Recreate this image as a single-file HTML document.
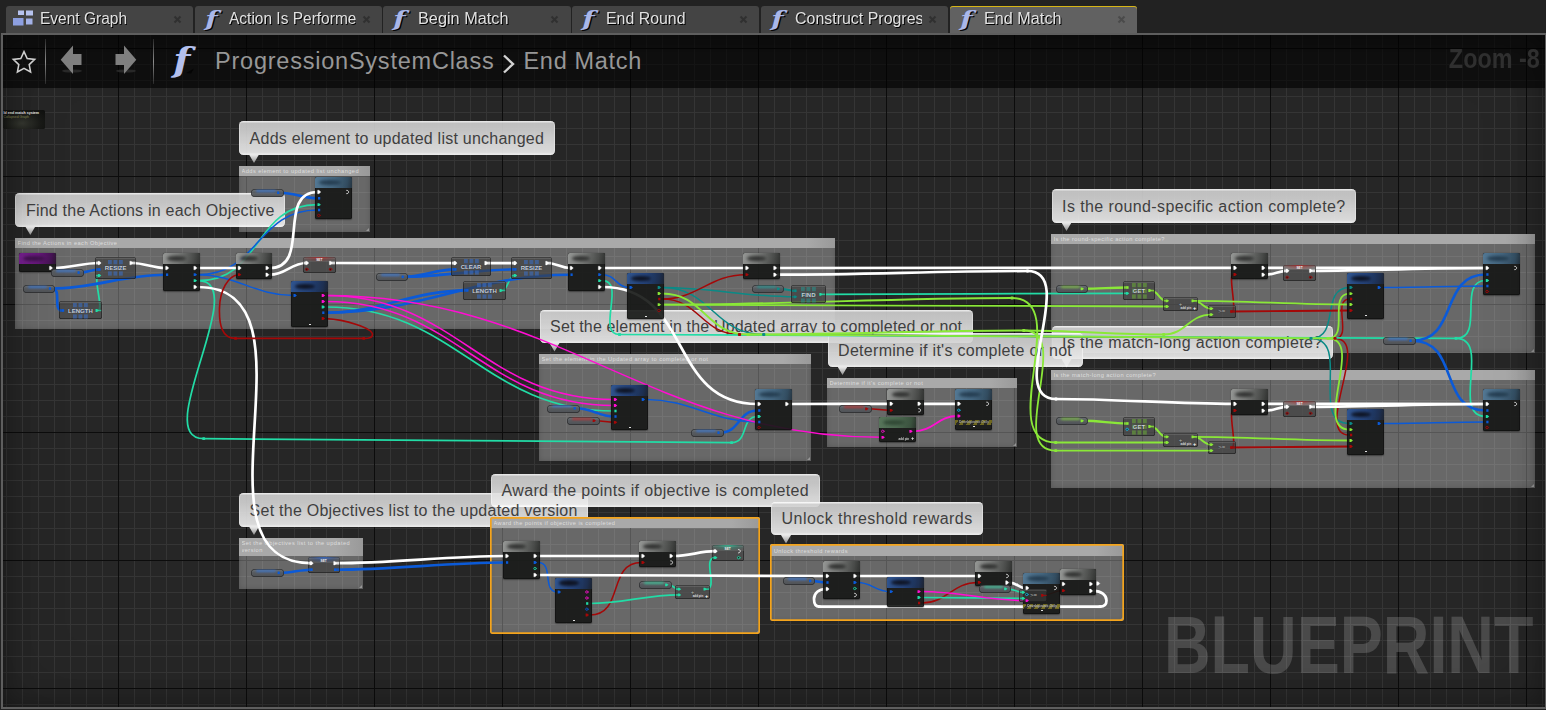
<!DOCTYPE html><html><head><meta charset="utf-8"><title>End Match - Blueprint</title><style>
html,body{margin:0;padding:0;background:#222}
body{width:1546px;height:710px;overflow:hidden;position:relative;font-family:"Liberation Sans",sans-serif}
.abs,.abs *{position:absolute}
#panel{left:1px;top:33px;width:1545px;height:676px;background:#5e5e5e}
#graph{left:2px;top:2px;width:1542px;height:672px;overflow:hidden;background-color:#262626;
 background-image:
  linear-gradient(#0c0c0c 1px,transparent 1px),linear-gradient(90deg,#0c0c0c 1px,transparent 1px),
  linear-gradient(#353535 1px,transparent 1px),linear-gradient(90deg,#353535 1px,transparent 1px);
 background-size:128px 128px,128px 128px,16px 16px,16px 16px;
 background-position:0 13px,115px 0,0 13px,3px 0;
 background-repeat:repeat,repeat,repeat,repeat}
#g{left:-3px;top:-35px;width:1546px;height:710px}
.tab{top:6px;height:27px;width:187.2px;overflow:hidden;background:#444;border-radius:3px 3px 0 0;color:#e2e2e2;font-size:16px;line-height:27px;text-shadow:1px 1px 0 #000}
.tab.act{background:#616161;box-shadow:inset 0 1px 0 #d6b516}
.tab .t{left:34.3px;top:-1px;width:127px;overflow:hidden;white-space:nowrap;height:27px}
.tab .t span{left:0;top:0;transform-origin:0 50%;display:block}
.tab .x{left:167px;top:8.5px;width:9px;height:9px;text-shadow:none}
.tab .fi{left:6px;top:1px}
.cb{background:rgba(255,255,255,.305);box-shadow:inset 0 0 5px rgba(0,0,0,.18)}
.cb .ti{left:0;top:0;right:0;background:linear-gradient(90deg,#a9a9a9 0,#a9a9a9 calc(100% - 28px),#999 100%);color:rgba(255,255,255,.8);font-size:5.6px;line-height:7px;white-space:nowrap;overflow:hidden}
.tt{color:rgba(255,255,255,.62);font-size:5.7px;line-height:7px;letter-spacing:.42px;white-space:nowrap;overflow:hidden}
.cb.sel{border-radius:2px;overflow:hidden}
.cb.sel:after{content:'';position:absolute;left:0;top:0;right:0;bottom:0;box-shadow:inset 0 0 0 1.7px #f4a41c;border-radius:2px}
.cb .grip{right:1px;bottom:1px;width:0;height:0;border-left:3px solid transparent;border-bottom:3px solid rgba(255,255,255,.35)}
.bb{height:33.5px;border-radius:4.5px;background:linear-gradient(#fff 0,#f6f6f6 1px,#d0d0d0 2.2px,#d4d4d4 25%,#e2e2e2 60%,#eeeeee 92%,#fff 97%);opacity:.9;box-shadow:inset -1px 0 0 rgba(255,255,255,.55),inset 1px 0 0 rgba(255,255,255,.5);color:#454545;font-size:16px;line-height:33px;white-space:nowrap}
.bt{color:#3f3f3f;margin-top:.5px;font-size:16px;line-height:33px;white-space:nowrap;height:33px}
.bb i{left:10px;top:33.5px;width:10px;height:8.5px;background:linear-gradient(#fff,#9a9a9a);clip-path:polygon(0 0,100% 0,50% 100%)}
.nd{border-radius:1.8px;background:#151715;box-shadow:inset 0 0 0 .7px rgba(0,0,0,.65),0 .5px 1.5px rgba(0,0,0,.45);opacity:.9;overflow:hidden}
.nd .hd{left:0;top:0;right:0;height:11px}
.nd .bl{left:22%;top:2.5px;width:50%;height:5.5px;border-radius:50%;filter:blur(1.6px)}
.nd.black .hd{background:linear-gradient(100deg,#9a9c9a 0%,#787a78 42%,#484a48 80%,#2a2c2a 100%)}
.nd.black .bl{background:#2e2f2e;left:12%}
.nd.dblue .hd{background:linear-gradient(100deg,#2a5394 0%,#1d3f7c 50%,#15294e 85%,#141c2a 100%)}
.nd.dblue .bl{background:#050b1c;left:10%;width:55%}
.nd.lblue .hd{background:linear-gradient(100deg,#527b9a 0%,#416783 50%,#2d4a60 85%,#1f2f3c 100%)}
.nd.lblue .bl{background:#1f3a50;left:10%;width:60%}
.nd.green .hd{background:linear-gradient(100deg,#56775a 0%,#4a6b4f 50%,#36503a 85%,#232f25 100%)}
.nd.green .bl{background:#2c4631;left:10%;width:60%}
.nd.purple .hd{background:linear-gradient(100deg,#7a1a96 0%,#68107f 50%,#420b52 85%,#26102b 100%)}
.nd.purple .bl{background:#3a0a48;left:10%;width:60%}
.nd .hz{left:0;right:0;height:5px;background:repeating-linear-gradient(120deg,#a89a1a 0 3px,#2a2a22 3px 6px);opacity:.62}
.nd .hz b{left:4px;right:3px;top:0;font-size:3.4px;line-height:5px;color:#f4f4f4;white-space:nowrap;font-weight:700;overflow:hidden}
.nd .ct{left:50%;bottom:2.6px;width:1.8px;height:.9px;margin-left:-.6px;background:#eee}
.cp{border-radius:2.6px;background:rgba(60,60,60,.66);box-shadow:inset 0 0 0 .7px rgba(20,20,20,.7),inset 0 1.6px 0 rgba(255,255,255,.22);color:#c9d0da;font-weight:700;font-size:6px;text-align:center;overflow:hidden}
.cp .ic{left:50%;top:50%;width:14.8px;height:15.6px;margin:-7.8px 0 0 -7.4px;opacity:.58}
.cp .lb{left:0;right:0;top:50%;margin-top:-3.6px;line-height:8px;letter-spacing:0;text-shadow:0 0 1px #222}
.cp .ap{right:6.5px;bottom:.6px;font-size:3px;line-height:4px;color:#ddd;font-weight:700}
.cp .pl{right:1.5px;bottom:0px;font-size:5.5px;line-height:5px;color:#fff;font-weight:700}
.st .sh{left:0;right:0;top:0;height:5.4px;opacity:.8}
.st .sl{left:0;right:0;top:1.2px;font-size:3.2px;line-height:4px;color:#f2f2f2;text-align:center;font-weight:700}
.pl2{border-radius:4px;background:linear-gradient(#70757b 0%,#575b60 45%,#4c4f54 100%);box-shadow:inset 0 0 0 .7px rgba(25,25,25,.75);overflow:hidden;opacity:.93}
.pl2 u{left:5px;right:8px;top:.9px;height:2px;border-radius:2px;filter:blur(1.1px);opacity:.75}
#vig{left:0;top:0;right:0;bottom:0;box-shadow:inset 0 0 26px rgba(0,0,0,.38),inset 0 0 70px rgba(0,0,0,.12);pointer-events:none}
#hdr{left:3px;top:35px;width:1542px;height:53px;background:rgba(0,0,0,.6)}
#crumb{left:215px;top:47px;font-size:23.5px;line-height:28px;color:#979797;white-space:nowrap}
#zoom{right:6.5px;top:41.5px;font-size:28px;line-height:34px;font-weight:700;color:#2f2f2f;white-space:nowrap;transform-origin:100% 50%;transform:scaleX(.836)}
#wm{left:1164.2px;top:599.5px;font-size:81px;line-height:90px;font-weight:700;color:rgba(255,255,255,.17);white-space:nowrap;transform-origin:0 50%;transform:scaleX(.797)}
svg{left:0;top:0;overflow:visible}
</style></head><body class="abs">
<div class="tab" style="left:5.8px"><svg class="fi" style="left:7px;top:4px" width="22" height="18" viewBox="0 0 22 18"><rect x="5" y="0.5" width="6" height="4.5" fill="#b7c3ee"/><rect x="13" y="0.5" width="7" height="5" fill="#b7c3ee"/><rect x="0" y="8" width="10.5" height="7.5" fill="#8d9fe0"/><rect x="13" y="8.5" width="6.5" height="6" fill="#a4b2e8"/></svg><div class="t"><span style="transform:scaleX(0.9685)">Event Graph</span></div><svg class="x" viewBox="0 0 9 9"><path d="M1.5 1.5L7.5 7.5M7.5 1.5L1.5 7.5" stroke="#303030" stroke-width="2"/></svg></div>
<div class="tab" style="left:194.6px"><svg class="fi" width="26" height="27" viewBox="0 0 26 27"><text transform="translate(4.3 19) scale(1.36 1)" font-family="DejaVu Serif,Liberation Serif,serif" font-style="italic" font-weight="700" font-size="21" fill="#a9b7ea">f</text></svg><div class="t"><span style="transform:scaleX(0.9680)">Action Is Performed</span></div><svg class="x" viewBox="0 0 9 9"><path d="M1.5 1.5L7.5 7.5M7.5 1.5L1.5 7.5" stroke="#303030" stroke-width="2"/></svg></div>
<div class="tab" style="left:383.4px"><svg class="fi" width="26" height="27" viewBox="0 0 26 27"><text transform="translate(4.3 19) scale(1.36 1)" font-family="DejaVu Serif,Liberation Serif,serif" font-style="italic" font-weight="700" font-size="21" fill="#a9b7ea">f</text></svg><div class="t"><span style="transform:scaleX(1.0175)">Begin Match</span></div><svg class="x" viewBox="0 0 9 9"><path d="M1.5 1.5L7.5 7.5M7.5 1.5L1.5 7.5" stroke="#303030" stroke-width="2"/></svg></div>
<div class="tab" style="left:572.2px"><svg class="fi" width="26" height="27" viewBox="0 0 26 27"><text transform="translate(4.3 19) scale(1.36 1)" font-family="DejaVu Serif,Liberation Serif,serif" font-style="italic" font-weight="700" font-size="21" fill="#a9b7ea">f</text></svg><div class="t"><span style="transform:scaleX(0.9930)">End Round</span></div><svg class="x" viewBox="0 0 9 9"><path d="M1.5 1.5L7.5 7.5M7.5 1.5L1.5 7.5" stroke="#303030" stroke-width="2"/></svg></div>
<div class="tab" style="left:761px"><svg class="fi" width="26" height="27" viewBox="0 0 26 27"><text transform="translate(4.3 19) scale(1.36 1)" font-family="DejaVu Serif,Liberation Serif,serif" font-style="italic" font-weight="700" font-size="21" fill="#a9b7ea">f</text></svg><div class="t"><span style="transform:scaleX(0.9968)">Construct Progress</span></div><svg class="x" viewBox="0 0 9 9"><path d="M1.5 1.5L7.5 7.5M7.5 1.5L1.5 7.5" stroke="#303030" stroke-width="2"/></svg></div>
<div class="tab act" style="left:949.8px"><svg class="fi" width="26" height="27" viewBox="0 0 26 27"><text transform="translate(4.3 19) scale(1.36 1)" font-family="DejaVu Serif,Liberation Serif,serif" font-style="italic" font-weight="700" font-size="21" fill="#a9b7ea">f</text></svg><div class="t"><span style="transform:scaleX(1.0133)">End Match</span></div><svg class="x" viewBox="0 0 9 9"><path d="M1.5 1.5L7.5 7.5M7.5 1.5L1.5 7.5" stroke="#4a4a4a" stroke-width="2"/></svg></div>
<div id="panel"><div id="graph"><div id="g">
<div class="cb" style="left:239px;top:166px;width:131px;height:66px"><div class="ti" style="height:10px"></div><div class="grip"></div></div>
<div class="bb" style="left:239px;top:121px;width:315.5px"><i></i></div>
<div class="cb" style="left:15px;top:238px;width:819.5px;height:91px"><div class="ti" style="height:9.6px"></div><div class="grip"></div></div>
<div class="bb" style="left:15.3px;top:193px;width:269.7px"><i></i></div>
<div class="cb" style="left:539px;top:354px;width:272px;height:106.7px"><div class="ti" style="height:10px"></div><div class="grip"></div></div>
<div class="bb" style="left:539.5px;top:309.5px;width:433px"><i></i></div>
<div class="cb" style="left:1051px;top:234px;width:483.6px;height:118.5px"><div class="ti" style="height:10px"></div><div class="grip"></div></div>
<div class="bb" style="left:1051.5px;top:189px;width:304.5px"><i></i></div>
<div class="cb" style="left:1051px;top:369.5px;width:483.6px;height:118.5px"><div class="ti" style="height:10.5px"></div><div class="grip"></div></div>
<div class="bb" style="left:1051.5px;top:325.5px;width:281.5px"><i></i></div>
<div class="cb" style="left:827px;top:378px;width:189.5px;height:68.6px"><div class="ti" style="height:10px"></div><div class="grip"></div></div>
<div class="bb" style="left:827.5px;top:333px;width:255px"><i></i></div>
<div class="cb" style="left:239px;top:537.5px;width:123.5px;height:51.5px"><div class="ti" style="height:18.5px"></div><div class="grip"></div></div>
<div class="bb" style="left:239px;top:493px;width:349px"><i></i></div>
<div class="cb sel" style="left:490px;top:517px;width:270px;height:116.6px"><div class="ti" style="height:10.5px"></div><div class="grip"></div></div>
<div class="bb" style="left:491px;top:473.5px;width:328.5px"><i></i></div>
<div class="cb sel" style="left:770.2px;top:544.2px;width:353.8px;height:76.5px"><div class="ti" style="height:11.8px"></div><div class="grip"></div></div>
<div class="bb" style="left:771px;top:501.5px;width:212px"><i></i></div>
<div class="bt" style="left:249.6px;top:121px;letter-spacing:0.236px">Adds element to updated list unchanged</div>
<div class="bt" style="left:25.9px;top:193px;letter-spacing:0.226px">Find the Actions in each Objective</div>
<div class="bt" style="left:550.1px;top:309.5px;letter-spacing:0.163px">Set the element in the Updated array to completed or not</div>
<div class="bt" style="left:1062.1px;top:189px;letter-spacing:0.392px">Is the round-specific action complete?</div>
<div class="bt" style="left:1062.1px;top:325.5px;letter-spacing:0.364px">Is the match-long action complete?</div>
<div class="bt" style="left:838.1px;top:333px;letter-spacing:0.288px">Determine if it&#x27;s complete or not</div>
<div class="bt" style="left:249.6px;top:493px;letter-spacing:0.248px">Set the Objectives list to the updated version</div>
<div class="bt" style="left:501.6px;top:473.5px;letter-spacing:0.340px">Award the points if objective is completed</div>
<div class="bt" style="left:781.6px;top:501.5px;letter-spacing:0.436px">Unlock threshold rewards</div>
<div class="tt" style="left:241.5px;top:168.2px;width:127px;height:8.4px">Adds element to updated list unchanged</div>
<div class="tt" style="left:17.5px;top:240.2px;width:815.5px;height:8px">Find the Actions in each Objective</div>
<div class="tt" style="left:541.5px;top:356.2px;width:268px;height:8.4px">Set the element in the Updated array to completed or not</div>
<div class="tt" style="left:1053.5px;top:236.2px;width:479.6px;height:8.4px">Is the round-specific action complete?</div>
<div class="tt" style="left:1053.5px;top:371.7px;width:479.6px;height:8.9px">Is the match-long action complete?</div>
<div class="tt" style="left:829.5px;top:380.2px;width:185.5px;height:8.4px">Determine if it&#x27;s complete or not</div>
<div class="tt" style="left:241.5px;top:539.7px;width:119.5px;height:16.9px">Set the Objectives list to the updated<br>version</div>
<div class="tt" style="left:493.5px;top:520.3px;width:266px;height:8.9px">Award the points if objective is completed</div>
<div class="tt" style="left:773.7px;top:547.5px;width:349.8px;height:10.2px">Unlock threshold rewards</div>
<svg width="1546" height="710" viewBox="0 0 1546 710" fill="none" stroke-linecap="round">
<path d="M662,287.5C709.43,287.5 747.57,296.8 795,296.8" stroke="#0a8a86" stroke-width="1.5"/>
<path d="M780.3,288.8C785.87,288.8 789.43,290.8 795,290.8" stroke="#0a8a86" stroke-width="2.2"/>
<path d="M662,287.5C711.57,287.5 714.13,334.5 763.7,334.5" stroke="#0a8a86" stroke-width="1.5"/>
<path d="M763.7,334.5C947.43,334.5 1127.27,338.4 1311,338.4" stroke="#0a8a86" stroke-width="1.5"/>
<path d="M1311,338.4C1340.8,338.4 1319.7,287.5 1349.5,287.5" stroke="#0a8a86" stroke-width="1.5"/>
<path d="M1311,338.4C1352.2,338.4 1308.3,423.5 1349.5,423.5" stroke="#0a8a86" stroke-width="1.5"/>
<path d="M662,299C697.93,299 709.57,274.7 745.5,274.7" stroke="#a40808" stroke-width="1.5"/>
<path d="M662,299C699.67,299 701.83,334.5 739.5,334.5" stroke="#a40808" stroke-width="1.5"/>
<path d="M739.5,334.5C939.3,334.5 1135.2,338.4 1335,338.4" stroke="#a40808" stroke-width="1.5"/>
<path d="M1335,338.4C1352.97,338.4 1331.53,299 1349.5,299" stroke="#a40808" stroke-width="1.5"/>
<path d="M1231.7,311.5C1271.3,311.5 1309.9,310.5 1349.5,310.5" stroke="#a40808" stroke-width="1.8"/>
<path d="M1231.7,311.5C1237.7,311.5 1227.5,274.5 1233.5,274.5" stroke="#a40808" stroke-width="1.6"/>
<path d="M1335,338.4C1372.03,338.4 1312.47,435 1349.5,435" stroke="#a40808" stroke-width="1.5"/>
<path d="M1231.7,447.5C1271.3,447.5 1309.9,446.5 1349.5,446.5" stroke="#a40808" stroke-width="1.8"/>
<path d="M1231.7,447.5C1237.7,447.5 1227.5,410.5 1233.5,410.5" stroke="#a40808" stroke-width="1.6"/>
<path d="M596,420.65C602.52,420.65 607.38,422.3 613.9,422.3" stroke="#a40808" stroke-width="1.5"/>
<path d="M868.5,408.8C876.1,408.8 882.2,410.3 889.8,410.3" stroke="#a40808" stroke-width="1.5"/>
<path d="M589.9,615C624.6,615 606.8,562.5 641.5,562.5" stroke="#a40808" stroke-width="1.5"/>
<path d="M921.8,603C947.37,603 952.33,582.4 977.9,582.4" stroke="#a40808" stroke-width="1.5"/>
<path d="M1043.2,595.4C1051.03,595.4 1054.17,590.7 1062,590.7" stroke="#a40808" stroke-width="1.2"/>
<path d="M97.6,310.5C104.6,310.5 92,275.5 99,275.5" stroke="#22dca6" stroke-width="1.7"/>
<path d="M198,280.7C263.17,280.7 252.33,204.7 317.5,204.7" stroke="#22dca6" stroke-width="1.7"/>
<path d="M198,280.7C252.57,280.7 149.13,438.7 203.7,438.7" stroke="#22dca6" stroke-width="1.7"/>
<path d="M203.7,438.7C380.97,438.7 554.33,442.6 731.6,442.6" stroke="#22dca6" stroke-width="1.7"/>
<path d="M731.6,442.6C749,442.6 740.3,416.5 757.7,416.5" stroke="#22dca6" stroke-width="1.7"/>
<path d="M501.6,290.5C508.6,290.5 507.9,275.5 514.9,275.5" stroke="#22dca6" stroke-width="1.7"/>
<path d="M326,307C456.63,307 483.27,411 613.9,411" stroke="#22dca6" stroke-width="1.7"/>
<path d="M602.5,280.7C626.1,280.7 595.9,334.5 619.5,334.5" stroke="#22dca6" stroke-width="1.7"/>
<path d="M821.4,294.3C923.6,294.3 1024.8,293.3 1127,293.3" stroke="#22dca6" stroke-width="1.7"/>
<path d="M619.5,334.5C899.63,334.5 1175.87,338.4 1456,338.4" stroke="#22dca6" stroke-width="1.7"/>
<path d="M1456,338.4C1485.23,338.4 1456.57,280.5 1485.8,280.5" stroke="#22dca6" stroke-width="1.7"/>
<path d="M1456,338.4C1491.97,338.4 1449.83,416.5 1485.8,416.5" stroke="#22dca6" stroke-width="1.7"/>
<path d="M589.9,603.5C622.43,603.5 646.37,594.9 678.9,594.9" stroke="#22dca6" stroke-width="1.7"/>
<path d="M668.5,584.8C673.43,584.8 673.97,589.2 678.9,589.2" stroke="#22dca6" stroke-width="1.7"/>
<path d="M705.6,589.2C719.3,589.2 701.5,557.7 715.2,557.7" stroke="#22dca6" stroke-width="1.7"/>
<path d="M921.8,597.5C955.83,597.5 988.97,598.4 1023,598.4" stroke="#22dca6" stroke-width="1.7"/>
<path d="M1007.5,588.85C1013.82,588.85 1016.68,592.3 1023,592.3" stroke="#22dca6" stroke-width="1.7"/>
<path d="M80.4,272.5C87.6,272.5 91.8,269.5 99,269.5" stroke="#0b5ad8" stroke-width="2.6"/>
<path d="M51.8,288.55C94.32,288.55 122.98,274.7 165.5,274.7" stroke="#0b5ad8" stroke-width="2.6"/>
<path d="M51.8,288.55C62.72,288.55 51.68,310.5 62.6,310.5" stroke="#0b5ad8" stroke-width="2.6"/>
<path d="M198,274.7C259.4,274.7 256.1,210 317.5,210" stroke="#0b5ad8" stroke-width="1.5"/>
<path d="M198,274.7C236.77,274.7 254.73,295.5 293.5,295.5" stroke="#0b5ad8" stroke-width="1.5"/>
<path d="M280,192.7C294.37,192.7 303.13,198.3 317.5,198.3" stroke="#0b5ad8" stroke-width="2.6"/>
<path d="M404.5,276.8C423.77,276.8 435.63,269.4 454.9,269.4" stroke="#0b5ad8" stroke-width="2.6"/>
<path d="M404.5,276.8C443.77,276.8 475.63,269.4 514.9,269.4" stroke="#0b5ad8" stroke-width="2.6"/>
<path d="M326,312.7C380.4,312.7 412.5,290.4 466.9,290.4" stroke="#0b5ad8" stroke-width="2.6"/>
<path d="M326,312.7C420,312.7 476,274.7 570,274.7" stroke="#0b5ad8" stroke-width="2.6"/>
<path d="M602.5,274.7C615.77,274.7 616.23,287.5 629.5,287.5" stroke="#0b5ad8" stroke-width="1.5"/>
<path d="M1412.4,340.7C1458.93,340.7 1439.27,274.5 1485.8,274.5" stroke="#0b5ad8" stroke-width="2.6"/>
<path d="M1382,287.5C1417.1,287.5 1450.7,286 1485.8,286" stroke="#0b5ad8" stroke-width="1.5"/>
<path d="M1412.4,340.7C1460.13,340.7 1438.07,410.5 1485.8,410.5" stroke="#0b5ad8" stroke-width="2.6"/>
<path d="M1382,423.5C1417.1,423.5 1450.7,422 1485.8,422" stroke="#0b5ad8" stroke-width="1.5"/>
<path d="M576.5,408.3C591.7,408.3 598.7,416.5 613.9,416.5" stroke="#0b5ad8" stroke-width="2.6"/>
<path d="M646,399.5C690.73,399.5 712.97,422 757.7,422" stroke="#0b5ad8" stroke-width="1.5"/>
<path d="M720.3,432.6C740.13,432.6 737.87,410.5 757.7,410.5" stroke="#0b5ad8" stroke-width="2.6"/>
<path d="M280.5,572.8C291.73,572.8 299.87,569.7 311.1,569.7" stroke="#0b5ad8" stroke-width="2.6"/>
<path d="M335.6,569.7C394.63,569.7 446.47,562.5 505.5,562.5" stroke="#0b5ad8" stroke-width="2.6"/>
<path d="M538,562.5C554.4,562.5 541.3,592 557.7,592" stroke="#0b5ad8" stroke-width="1.5"/>
<path d="M812,580.9C817.17,580.9 820.73,582.5 825.9,582.5" stroke="#0b5ad8" stroke-width="2.6"/>
<path d="M857.8,582.5C871.5,582.5 876.1,591.6 889.8,591.6" stroke="#0b5ad8" stroke-width="1.5"/>
<path d="M326,295.5C456.63,295.5 483.27,399.5 613.9,399.5" stroke="#ff0ed2" stroke-width="1.5"/>
<path d="M326,295.5C558.43,295.5 649.07,437.3 881.5,437.3" stroke="#ff0ed2" stroke-width="1.5"/>
<path d="M326,301.5C456.63,301.5 483.27,405.5 613.9,405.5" stroke="#ff0ed2" stroke-width="1.5"/>
<path d="M913.7,431.3C933.4,431.3 937.8,416 957.5,416" stroke="#ff0ed2" stroke-width="1.8"/>
<path d="M921.8,591.6C959.2,591.6 987.6,600.6 1025,600.6" stroke="#ff0ed2" stroke-width="1.5"/>
<path d="M662,293.5C704.33,293.5 705.67,334.5 748,334.5" stroke="#8ae838" stroke-width="1.8"/>
<path d="M662,304.7C830.87,304.7 997.93,306.5 1166.8,306.5" stroke="#8ae838" stroke-width="1.8"/>
<path d="M662,304.7C780.9,304.7 893.1,298 1012,298" stroke="#8ae838" stroke-width="1.8"/>
<path d="M1012,298C1074.73,298 992.97,442.5 1055.7,442.5" stroke="#8ae838" stroke-width="1.8"/>
<path d="M1055.7,442.5C1092.73,442.5 1129.77,442.5 1166.8,442.5" stroke="#8ae838" stroke-width="1.8"/>
<path d="M748,334.5C841.23,334.5 930.47,330.5 1023.7,330.5" stroke="#8ae838" stroke-width="1.8"/>
<path d="M1023.7,330.5C1074.43,330.5 1004.97,450.7 1055.7,450.7" stroke="#8ae838" stroke-width="1.8"/>
<path d="M1055.7,450.7C1107.57,450.7 1159.33,450.6 1211.2,450.6" stroke="#8ae838" stroke-width="1.8"/>
<path d="M1023.7,330.5C1071.7,330.5 1115.7,334.5 1163.7,334.5" stroke="#8ae838" stroke-width="1.8"/>
<path d="M1163.7,334.5C1186.17,334.5 1188.73,314.6 1211.2,314.6" stroke="#8ae838" stroke-width="1.8"/>
<path d="M748,334.5C942.63,334.5 1133.37,338.4 1328,338.4" stroke="#8ae838" stroke-width="1.8"/>
<path d="M1328,338.4C1350.07,338.4 1327.43,293.7 1349.5,293.7" stroke="#8ae838" stroke-width="1.8"/>
<path d="M1084,288.8C1098.77,288.8 1112.23,287.5 1127,287.5" stroke="#8ae838" stroke-width="2.4"/>
<path d="M1150.4,290.5C1159.3,290.5 1157.9,300.8 1166.8,300.8" stroke="#8ae838" stroke-width="1.8"/>
<path d="M1193.6,300.8C1202.07,300.8 1202.73,308.6 1211.2,308.6" stroke="#8ae838" stroke-width="1.8"/>
<path d="M1193.6,300.8C1246.8,300.8 1296.3,304.5 1349.5,304.5" stroke="#8ae838" stroke-width="1.8"/>
<path d="M1328,338.4C1365.6,338.4 1311.9,429.7 1349.5,429.7" stroke="#8ae838" stroke-width="1.8"/>
<path d="M1084,420.8C1099.23,420.8 1111.77,423.5 1127,423.5" stroke="#8ae838" stroke-width="2.4"/>
<path d="M1150.4,426.5C1159.3,426.5 1157.9,436.8 1166.8,436.8" stroke="#8ae838" stroke-width="1.8"/>
<path d="M1193.6,436.8C1202.07,436.8 1202.73,444.6 1211.2,444.6" stroke="#8ae838" stroke-width="1.8"/>
<path d="M1193.6,436.8C1246.8,436.8 1296.3,440.5 1349.5,440.5" stroke="#8ae838" stroke-width="1.8"/>
<path d="M53.6,268C70.4,268 82.2,263 99,263" stroke="#ffffff" stroke-width="2.7"/>
<path d="M131.8,263C144.7,263 152.6,268 165.5,268" stroke="#ffffff" stroke-width="2.7"/>
<path d="M198,268C211.33,268 224.67,268 238,268" stroke="#ffffff" stroke-width="2.7"/>
<path d="M198,287C327.77,287 181.33,563.2 311.1,563.2" stroke="#ffffff" stroke-width="2.7"/>
<path d="M270,268C311.17,268 276.33,192 317.5,192" stroke="#ffffff" stroke-width="2.7"/>
<path d="M270,274.7C286.1,274.7 290.5,263 306.6,263" stroke="#ffffff" stroke-width="2.7"/>
<path d="M331.3,263C372.53,263 413.67,263.1 454.9,263.1" stroke="#ffffff" stroke-width="2.7"/>
<path d="M486.7,263.1C496.1,263.1 505.5,263.1 514.9,263.1" stroke="#ffffff" stroke-width="2.7"/>
<path d="M547.6,263.1C556.7,263.1 560.9,268 570,268" stroke="#ffffff" stroke-width="2.7"/>
<path d="M602.5,268C650.17,268 697.83,268 745.5,268" stroke="#ffffff" stroke-width="2.7"/>
<path d="M602.5,287C693.23,287 666.97,404 757.7,404" stroke="#ffffff" stroke-width="2.7"/>
<path d="M777.8,268C929.73,268 1081.57,267.9 1233.5,267.9" stroke="#ffffff" stroke-width="2.7"/>
<path d="M777.8,274.7C862.27,274.7 943.03,271 1027.5,271" stroke="#ffffff" stroke-width="2.7"/>
<path d="M1027.5,271C1079.67,271 1003.83,399 1056,399" stroke="#ffffff" stroke-width="2.7"/>
<path d="M1056,399C1116.8,399 1172.7,403.9 1233.5,403.9" stroke="#ffffff" stroke-width="2.7"/>
<path d="M1266,267.9C1339.3,267.9 1412.5,268 1485.8,268" stroke="#ffffff" stroke-width="2.7"/>
<path d="M1266,274.7C1274.3,274.7 1278.7,270.8 1287,270.8" stroke="#ffffff" stroke-width="2.7"/>
<path d="M1311.4,270.8C1370.47,270.8 1426.73,268 1485.8,268" stroke="#ffffff" stroke-width="2.7"/>
<path d="M1266,403.9C1339.3,403.9 1412.5,404 1485.8,404" stroke="#ffffff" stroke-width="2.7"/>
<path d="M1266,410.7C1274.3,410.7 1278.7,406.8 1287,406.8" stroke="#ffffff" stroke-width="2.7"/>
<path d="M1311.4,406.8C1370.47,406.8 1426.73,404 1485.8,404" stroke="#ffffff" stroke-width="2.7"/>
<path d="M789.7,404C823.13,404 856.37,403.8 889.8,403.8" stroke="#ffffff" stroke-width="2.7"/>
<path d="M922,403.8C933.83,403.8 945.67,403.8 957.5,403.8" stroke="#ffffff" stroke-width="2.7"/>
<path d="M335.6,563.2C394.63,563.2 446.47,556 505.5,556" stroke="#ffffff" stroke-width="2.7"/>
<path d="M538,556C572.5,556 607,556 641.5,556" stroke="#ffffff" stroke-width="2.7"/>
<path d="M538,575C634.3,575 729.6,576 825.9,576" stroke="#ffffff" stroke-width="2.7"/>
<path d="M674,556C689.33,556 699.87,551.2 715.2,551.2" stroke="#ffffff" stroke-width="2.7"/>
<path d="M857.8,576C897.83,576 937.87,576 977.9,576" stroke="#ffffff" stroke-width="2.7"/>
<path d="M1009.8,582.6C1016.9,582.6 1018.6,588 1025.7,588" stroke="#ffffff" stroke-width="2.7"/>
<path d="M326,318.6 C345,319.5 372.5,328 372.5,334.5 C372.5,338 368,338.6 363.7,338.4 L235.5,338.4 C222,338.4 219,325 219.5,308 C220,290 228,276 238,274.7" stroke="#a40808" stroke-width="1.6"/>
<path d="M1094,590.9 C1101,591 1106.5,595 1106.5,600.5 C1106.5,605 1104,606.6 1100,606.6 L819.3,606.6 C815.5,606.6 814,603 814,599 C814,593 819,589.2 825.5,589" stroke="#ffffff" stroke-width="2.7"/>
<rect x="202.1" y="437.3" width="3.2" height="2.8" rx="1" fill="#22dca6" stroke="none"/>
<rect x="730" y="441.2" width="3.2" height="2.8" rx="1" fill="#22dca6" stroke="none"/>
<rect x="233.9" y="337" width="3.2" height="2.8" rx="1" fill="#a40808" stroke="none"/>
<rect x="362.1" y="337" width="3.2" height="2.8" rx="1" fill="#a40808" stroke="none"/>
<rect x="617.9" y="333.1" width="3.2" height="2.8" rx="1" fill="#22dca6" stroke="none"/>
<rect x="1454.4" y="337" width="3.2" height="2.8" rx="1" fill="#22dca6" stroke="none"/>
<rect x="737.9" y="333.1" width="3.2" height="2.8" rx="1" fill="#a40808" stroke="none"/>
<rect x="1333.4" y="337" width="3.2" height="2.8" rx="1" fill="#a40808" stroke="none"/>
<rect x="746.4" y="333.1" width="3.2" height="2.8" rx="1" fill="#8ae838" stroke="none"/>
<rect x="1326.4" y="337" width="3.2" height="2.8" rx="1" fill="#8ae838" stroke="none"/>
<rect x="1162.1" y="333.1" width="3.2" height="2.8" rx="1" fill="#8ae838" stroke="none"/>
<rect x="1022.1" y="329.1" width="3.2" height="2.8" rx="1" fill="#8ae838" stroke="none"/>
<rect x="1010.4" y="296.6" width="3.2" height="2.8" rx="1" fill="#8ae838" stroke="none"/>
<rect x="1054.1" y="441.1" width="3.2" height="2.8" rx="1" fill="#8ae838" stroke="none"/>
<rect x="1054.1" y="449.3" width="3.2" height="2.8" rx="1" fill="#8ae838" stroke="none"/>
<rect x="762.1" y="333.1" width="3.2" height="2.8" rx="1" fill="#0a8a86" stroke="none"/>
<rect x="1309.4" y="337" width="3.2" height="2.8" rx="1" fill="#0a8a86" stroke="none"/>
<rect x="1025.9" y="269.6" width="3.2" height="2.8" rx="1" fill="#ffffff" stroke="none"/>
<rect x="1054.4" y="397.6" width="3.2" height="2.8" rx="1" fill="#ffffff" stroke="none"/>
<rect x="1098.4" y="605.2" width="3.2" height="2.8" rx="1" fill="#ffffff" stroke="none"/>
<rect x="817.7" y="605.2" width="3.2" height="2.8" rx="1" fill="#ffffff" stroke="none"/>
</svg>
<div class="nd purple" style="left:19.4px;top:253.2px;width:36.2px;height:18.6px"><div class="hd"><div class="bl"></div></div></div>
<div class="pl2" style="left:51.4px;top:268.7px;width:32.5px;height:8px"><u style="background:#2d7af0"></u></div>
<div class="cp" style="left:95.4px;top:257px;width:40.6px;height:21.5px"><svg class="ic" viewBox="0 0 14.8 15.6"><rect x="0.0" y="0.0" width="3.8" height="4.2" fill="#3b6ec4"/><rect x="5.5" y="0.0" width="3.8" height="4.2" fill="#3b6ec4"/><rect x="11.0" y="0.0" width="3.8" height="4.2" fill="#3b6ec4"/><rect x="0.0" y="5.7" width="3.8" height="4.2" fill="#3b6ec4"/><rect x="5.5" y="5.7" width="3.8" height="4.2" fill="#3b6ec4"/><rect x="11.0" y="5.7" width="3.8" height="4.2" fill="#3b6ec4"/><rect x="0.0" y="11.4" width="3.8" height="4.2" fill="#3b6ec4"/><rect x="5.5" y="11.4" width="3.8" height="4.2" fill="#3b6ec4"/><rect x="11.0" y="11.4" width="3.8" height="4.2" fill="#3b6ec4"/></svg><div class="lb">RESIZE</div></div>
<div class="pl2" style="left:23.2px;top:284.8px;width:32.1px;height:7.9px"><u style="background:#2d7af0"></u></div>
<div class="cp" style="left:59px;top:301.2px;width:42.8px;height:18.3px"><svg class="ic" viewBox="0 0 14.8 15.6"><rect x="0.0" y="0.0" width="3.8" height="4.2" fill="#3b6ec4"/><rect x="5.5" y="0.0" width="3.8" height="4.2" fill="#3b6ec4"/><rect x="11.0" y="0.0" width="3.8" height="4.2" fill="#3b6ec4"/><rect x="0.0" y="5.7" width="3.8" height="4.2" fill="#3b6ec4"/><rect x="5.5" y="5.7" width="3.8" height="4.2" fill="#3b6ec4"/><rect x="11.0" y="5.7" width="3.8" height="4.2" fill="#3b6ec4"/><rect x="0.0" y="11.4" width="3.8" height="4.2" fill="#3b6ec4"/><rect x="5.5" y="11.4" width="3.8" height="4.2" fill="#3b6ec4"/><rect x="11.0" y="11.4" width="3.8" height="4.2" fill="#3b6ec4"/></svg><div class="lb">LENGTH</div></div>
<div class="nd black" style="left:163px;top:253.2px;width:37px;height:37.6px"><div class="hd"><div class="bl"></div></div></div>
<div class="nd black" style="left:235.5px;top:253.2px;width:36.5px;height:25.5px"><div class="hd"><div class="bl"></div></div></div>
<div class="cp st" style="left:303px;top:257px;width:32.5px;height:15.5px"><div class="sh" style="background:radial-gradient(ellipse 60% 100% at 50% 0,rgba(200,40,40,.95) 0,rgba(150,70,70,.6) 55%,rgba(130,130,130,.35) 100%)"></div><div class="sl">SET</div></div>
<div class="nd dblue" style="left:291px;top:281px;width:37px;height:46px"><div class="hd"><div class="bl"></div></div><div class="ct"></div></div>
<div class="pl2" style="left:375.5px;top:273px;width:32.5px;height:8px"><u style="background:#2d7af0"></u></div>
<div class="cp" style="left:451.3px;top:257.1px;width:39.6px;height:18.5px"><svg class="ic" viewBox="0 0 14.8 15.6"><rect x="0.0" y="0.0" width="3.8" height="4.2" fill="#3b6ec4"/><rect x="5.5" y="0.0" width="3.8" height="4.2" fill="#3b6ec4"/><rect x="11.0" y="0.0" width="3.8" height="4.2" fill="#3b6ec4"/><rect x="0.0" y="5.7" width="3.8" height="4.2" fill="#3b6ec4"/><rect x="5.5" y="5.7" width="3.8" height="4.2" fill="#3b6ec4"/><rect x="11.0" y="5.7" width="3.8" height="4.2" fill="#3b6ec4"/><rect x="0.0" y="11.4" width="3.8" height="4.2" fill="#3b6ec4"/><rect x="5.5" y="11.4" width="3.8" height="4.2" fill="#3b6ec4"/><rect x="11.0" y="11.4" width="3.8" height="4.2" fill="#3b6ec4"/></svg><div class="lb">CLEAR</div></div>
<div class="cp" style="left:511.3px;top:257.1px;width:40.5px;height:21.5px"><svg class="ic" viewBox="0 0 14.8 15.6"><rect x="0.0" y="0.0" width="3.8" height="4.2" fill="#3b6ec4"/><rect x="5.5" y="0.0" width="3.8" height="4.2" fill="#3b6ec4"/><rect x="11.0" y="0.0" width="3.8" height="4.2" fill="#3b6ec4"/><rect x="0.0" y="5.7" width="3.8" height="4.2" fill="#3b6ec4"/><rect x="5.5" y="5.7" width="3.8" height="4.2" fill="#3b6ec4"/><rect x="11.0" y="5.7" width="3.8" height="4.2" fill="#3b6ec4"/><rect x="0.0" y="11.4" width="3.8" height="4.2" fill="#3b6ec4"/><rect x="5.5" y="11.4" width="3.8" height="4.2" fill="#3b6ec4"/><rect x="11.0" y="11.4" width="3.8" height="4.2" fill="#3b6ec4"/></svg><div class="lb">RESIZE</div></div>
<div class="cp" style="left:463.3px;top:281px;width:42.5px;height:18.7px"><svg class="ic" viewBox="0 0 14.8 15.6"><rect x="0.0" y="0.0" width="3.8" height="4.2" fill="#3b6ec4"/><rect x="5.5" y="0.0" width="3.8" height="4.2" fill="#3b6ec4"/><rect x="11.0" y="0.0" width="3.8" height="4.2" fill="#3b6ec4"/><rect x="0.0" y="5.7" width="3.8" height="4.2" fill="#3b6ec4"/><rect x="5.5" y="5.7" width="3.8" height="4.2" fill="#3b6ec4"/><rect x="11.0" y="5.7" width="3.8" height="4.2" fill="#3b6ec4"/><rect x="0.0" y="11.4" width="3.8" height="4.2" fill="#3b6ec4"/><rect x="5.5" y="11.4" width="3.8" height="4.2" fill="#3b6ec4"/><rect x="11.0" y="11.4" width="3.8" height="4.2" fill="#3b6ec4"/></svg><div class="lb">LENGTH</div></div>
<div class="nd black" style="left:567.5px;top:253.2px;width:37px;height:37.6px"><div class="hd"><div class="bl"></div></div></div>
<div class="nd dblue" style="left:627px;top:273px;width:37px;height:46px"><div class="hd"><div class="bl"></div></div><div class="ct"></div></div>
<div class="nd black" style="left:743px;top:253.2px;width:36.8px;height:25.8px"><div class="hd"><div class="bl"></div></div></div>
<div class="pl2" style="left:751.5px;top:285px;width:32.3px;height:8px"><u style="background:#12a09a"></u></div>
<div class="cp" style="left:791.4px;top:285.3px;width:34.2px;height:18.2px"><svg class="ic" viewBox="0 0 14.8 15.6"><rect x="0.0" y="0.0" width="3.8" height="4.2" fill="#2a8f8a"/><rect x="5.5" y="0.0" width="3.8" height="4.2" fill="#2a8f8a"/><rect x="11.0" y="0.0" width="3.8" height="4.2" fill="#2a8f8a"/><rect x="0.0" y="5.7" width="3.8" height="4.2" fill="#2a8f8a"/><rect x="5.5" y="5.7" width="3.8" height="4.2" fill="#2a8f8a"/><rect x="11.0" y="5.7" width="3.8" height="4.2" fill="#2a8f8a"/><rect x="0.0" y="11.4" width="3.8" height="4.2" fill="#2a8f8a"/><rect x="5.5" y="11.4" width="3.8" height="4.2" fill="#2a8f8a"/><rect x="11.0" y="11.4" width="3.8" height="4.2" fill="#2a8f8a"/></svg><div class="lb">FIND</div></div>
<div class="pl2" style="left:251px;top:189px;width:32.5px;height:7.8px"><u style="background:#2d7af0"></u></div>
<div class="nd lblue" style="left:315px;top:177.2px;width:37px;height:41.8px"><div class="hd"><div class="bl"></div></div></div>
<div class="pl2" style="left:547px;top:404.5px;width:33px;height:8px"><u style="background:#2d7af0"></u></div>
<div class="pl2" style="left:567px;top:416.7px;width:32.5px;height:8.3px"><u style="background:#d02020"></u></div>
<div class="nd dblue" style="left:611.4px;top:385.2px;width:36.6px;height:45.3px"><div class="hd"><div class="bl"></div></div><div class="ct"></div></div>
<div class="pl2" style="left:691.2px;top:428.9px;width:32.6px;height:7.8px"><u style="background:#2d7af0"></u></div>
<div class="nd lblue" style="left:755.2px;top:389.3px;width:36.5px;height:41.2px"><div class="hd"><div class="bl"></div></div></div>
<div class="pl2" style="left:839px;top:405.2px;width:33px;height:7.6px"><u style="background:#d02020"></u></div>
<div class="nd black" style="left:887.3px;top:389px;width:36.7px;height:25.6px"><div class="hd"><div class="bl"></div></div></div>
<div class="nd green" style="left:879px;top:417.3px;width:36.7px;height:24.4px"><div class="hd"><div class="bl"></div></div><div class="ap" style="position:absolute;right:6.5px;bottom:.8px;font-size:3px;line-height:4px;color:#ddd;font-weight:700">add pin</div><div style="position:absolute;right:1.5px;bottom:.3px;font-size:5.5px;line-height:5px;color:#fff;font-weight:700">+</div></div>
<div class="nd lblue" style="left:955px;top:389px;width:37px;height:40.8px"><div class="hd"><div class="bl"></div></div><div class="hz" style="top:30.5px"><b>Development Only</b></div><div class="ct"></div></div>
<div class="pl2" style="left:1056px;top:285px;width:31.5px;height:8px"><u style="background:#86d838"></u></div>
<div class="cp" style="left:1123.4px;top:281px;width:31.2px;height:18.7px"><svg class="ic" viewBox="0 0 14.8 15.6"><rect x="0.0" y="0.0" width="3.8" height="4.2" fill="#6aa83a"/><rect x="5.5" y="0.0" width="3.8" height="4.2" fill="#6aa83a"/><rect x="11.0" y="0.0" width="3.8" height="4.2" fill="#6aa83a"/><rect x="0.0" y="5.7" width="3.8" height="4.2" fill="#6aa83a"/><rect x="5.5" y="5.7" width="3.8" height="4.2" fill="#6aa83a"/><rect x="11.0" y="5.7" width="3.8" height="4.2" fill="#6aa83a"/><rect x="0.0" y="11.4" width="3.8" height="4.2" fill="#6aa83a"/><rect x="5.5" y="11.4" width="3.8" height="4.2" fill="#6aa83a"/><rect x="11.0" y="11.4" width="3.8" height="4.2" fill="#6aa83a"/></svg><div class="lb">GET</div></div>
<div class="cp" style="left:1163.2px;top:297px;width:34.6px;height:13.9px"><div class="lb" style="font-size:6px;color:#b4b4b4;margin-top:-4.2px;font-weight:400">+</div><div class="ap">add pin</div><div class="pl">+</div></div>
<div class="cp" style="left:1207.6px;top:305.4px;width:28.3px;height:12.3px"><div class="lb" style="font-size:6px;color:#b4b4b4;margin-top:-4.2px;font-weight:400">&gt;=</div></div>
<div class="nd black" style="left:1231px;top:253.2px;width:37px;height:25.5px"><div class="hd"><div class="bl"></div></div></div>
<div class="cp st" style="left:1283.4px;top:265px;width:32.2px;height:15.6px"><div class="sh" style="background:radial-gradient(ellipse 60% 100% at 50% 0,rgba(200,40,40,.95) 0,rgba(150,70,70,.6) 55%,rgba(130,130,130,.35) 100%)"></div><div class="sl">SET</div></div>
<div class="nd dblue" style="left:1347px;top:273px;width:37px;height:45.7px"><div class="hd"><div class="bl"></div></div><div class="ct"></div></div>
<div class="nd lblue" style="left:1483.3px;top:253px;width:36.7px;height:42px"><div class="hd"><div class="bl"></div></div></div>
<div class="pl2" style="left:1055.5px;top:417px;width:32px;height:8px"><u style="background:#86d838"></u></div>
<div class="cp" style="left:1123.4px;top:417px;width:31.2px;height:18.7px"><svg class="ic" viewBox="0 0 14.8 15.6"><rect x="0.0" y="0.0" width="3.8" height="4.2" fill="#6aa83a"/><rect x="5.5" y="0.0" width="3.8" height="4.2" fill="#6aa83a"/><rect x="11.0" y="0.0" width="3.8" height="4.2" fill="#6aa83a"/><rect x="0.0" y="5.7" width="3.8" height="4.2" fill="#6aa83a"/><rect x="5.5" y="5.7" width="3.8" height="4.2" fill="#6aa83a"/><rect x="11.0" y="5.7" width="3.8" height="4.2" fill="#6aa83a"/><rect x="0.0" y="11.4" width="3.8" height="4.2" fill="#6aa83a"/><rect x="5.5" y="11.4" width="3.8" height="4.2" fill="#6aa83a"/><rect x="11.0" y="11.4" width="3.8" height="4.2" fill="#6aa83a"/></svg><div class="lb">GET</div></div>
<div class="cp" style="left:1163.2px;top:433px;width:34.6px;height:13.9px"><div class="lb" style="font-size:6px;color:#b4b4b4;margin-top:-4.2px;font-weight:400">+</div><div class="ap">add pin</div><div class="pl">+</div></div>
<div class="cp" style="left:1207.6px;top:441.4px;width:28.3px;height:12.3px"><div class="lb" style="font-size:6px;color:#b4b4b4;margin-top:-4.2px;font-weight:400">&gt;=</div></div>
<div class="nd black" style="left:1231px;top:389.2px;width:37px;height:25.5px"><div class="hd"><div class="bl"></div></div></div>
<div class="cp st" style="left:1283.4px;top:401px;width:32.2px;height:15.6px"><div class="sh" style="background:radial-gradient(ellipse 60% 100% at 50% 0,rgba(200,40,40,.95) 0,rgba(150,70,70,.6) 55%,rgba(130,130,130,.35) 100%)"></div><div class="sl">SET</div></div>
<div class="nd dblue" style="left:1347px;top:409px;width:37px;height:45.7px"><div class="hd"><div class="bl"></div></div><div class="ct"></div></div>
<div class="nd lblue" style="left:1483.3px;top:389px;width:36.7px;height:42px"><div class="hd"><div class="bl"></div></div></div>
<div class="pl2" style="left:1383.3px;top:337px;width:32.6px;height:7.8px"><u style="background:#2d7af0"></u></div>
<div class="pl2" style="left:251px;top:569px;width:33px;height:8px"><u style="background:#2d7af0"></u></div>
<div class="cp st" style="left:307.5px;top:557.4px;width:32.3px;height:15.3px"><div class="sh" style="background:radial-gradient(ellipse 60% 100% at 50% 0,rgba(50,110,220,.95) 0,rgba(70,100,160,.6) 55%,rgba(130,130,130,.35) 100%)"></div><div class="sl">SET</div></div>
<div class="nd black" style="left:503px;top:541px;width:37px;height:37.7px"><div class="hd"><div class="bl"></div></div></div>
<div class="nd dblue" style="left:555.2px;top:577.5px;width:36.7px;height:45.5px"><div class="hd"><div class="bl"></div></div><div class="ct"></div></div>
<div class="nd black" style="left:639px;top:541px;width:37px;height:26px"><div class="hd"><div class="bl"></div></div></div>
<div class="cp st" style="left:711.6px;top:545.4px;width:32.1px;height:15.2px"><div class="sh" style="background:radial-gradient(ellipse 60% 100% at 50% 0,rgba(50,210,165,.95) 0,rgba(70,150,130,.6) 55%,rgba(130,130,130,.35) 100%)"></div><div class="sl">SET</div></div>
<div class="pl2" style="left:639px;top:581px;width:33px;height:8px"><u style="background:#2fe0a8"></u></div>
<div class="cp" style="left:675.3px;top:585.4px;width:34.5px;height:13.2px"><div class="lb" style="font-size:6px;color:#b4b4b4;margin-top:-4.2px;font-weight:400">+</div><div class="ap">add pin</div><div class="pl">+</div></div>
<div class="pl2" style="left:783.3px;top:577.4px;width:32.2px;height:7.4px"><u style="background:#2d7af0"></u></div>
<div class="nd black" style="left:823.4px;top:561.3px;width:36.4px;height:37.4px"><div class="hd"><div class="bl"></div></div></div>
<div class="nd dblue" style="left:887.3px;top:577.4px;width:36.5px;height:29.4px"><div class="hd"><div class="bl"></div></div></div>
<div class="nd black" style="left:975.4px;top:561px;width:36.4px;height:25.3px"><div class="hd"><div class="bl"></div></div></div>
<div class="pl2" style="left:979.2px;top:585.4px;width:31.8px;height:7.3px"><u style="background:#2fe0a8"></u></div>
<div class="nd lblue" style="left:1023.2px;top:573px;width:36.7px;height:40.8px"><div class="hd"><div class="bl"></div></div><div class="hz" style="top:30.9px"><b>Development Only</b></div><div class="ct"></div></div>
<div class="cp" style="left:1019.4px;top:589px;width:28px;height:12.7px"><div class="lb" style="font-size:6px;color:#b4b4b4;margin-top:-4.2px;font-weight:400">&gt;=</div></div>
<div class="nd black" style="left:1059.5px;top:569.2px;width:36.2px;height:25.4px"><div class="hd"><div class="bl"></div></div></div>
<div style="left:3px;top:109.5px;width:42px;height:19.5px;background:radial-gradient(ellipse at 45% 70%,#353730 0%,#1a1b18 55%,#0e0f0e 100%);border-radius:1.5px"><div style="left:.5px;top:1.4px;font-size:3.6px;line-height:4px;color:#eee;font-weight:700;white-space:nowrap">ld end match system</div><div style="left:.5px;top:5.6px;font-size:3.4px;line-height:4px;color:#8a8a55;white-space:nowrap">Collapsed Graph</div></div>
<svg width="1546" height="710" viewBox="0 0 1546 710">
<path d="M96,263H99" stroke="#ffffff" stroke-width="2.7" opacity=".72" fill="none"/>
<path d="M96,269.5H99" stroke="#0b5ad8" stroke-width="2.6" opacity=".72" fill="none"/>
<path d="M101.2,310.5H97.6" stroke="#22dca6" stroke-width="1.5" opacity=".72" fill="none"/>
<path d="M96,275.5H99" stroke="#22dca6" stroke-width="1.5" opacity=".72" fill="none"/>
<path d="M59.6,310.5H62.6" stroke="#0b5ad8" stroke-width="2.6" opacity=".72" fill="none"/>
<path d="M135.4,263H131.8" stroke="#ffffff" stroke-width="2.7" opacity=".72" fill="none"/>
<path d="M308.1,563.2H311.1" stroke="#ffffff" stroke-width="2.7" opacity=".72" fill="none"/>
<path d="M303.6,263H306.6" stroke="#ffffff" stroke-width="2.7" opacity=".72" fill="none"/>
<path d="M334.9,263H331.3" stroke="#ffffff" stroke-width="2.7" opacity=".72" fill="none"/>
<path d="M451.9,263.1H454.9" stroke="#ffffff" stroke-width="2.7" opacity=".72" fill="none"/>
<path d="M490.3,263.1H486.7" stroke="#ffffff" stroke-width="2.7" opacity=".72" fill="none"/>
<path d="M511.9,263.1H514.9" stroke="#ffffff" stroke-width="2.7" opacity=".72" fill="none"/>
<path d="M551.2,263.1H547.6" stroke="#ffffff" stroke-width="2.7" opacity=".72" fill="none"/>
<path d="M451.9,269.4H454.9" stroke="#0b5ad8" stroke-width="2.6" opacity=".72" fill="none"/>
<path d="M511.9,269.4H514.9" stroke="#0b5ad8" stroke-width="2.6" opacity=".72" fill="none"/>
<path d="M463.9,290.4H466.9" stroke="#0b5ad8" stroke-width="2.6" opacity=".72" fill="none"/>
<path d="M505.2,290.5H501.6" stroke="#22dca6" stroke-width="1.5" opacity=".72" fill="none"/>
<path d="M511.9,275.5H514.9" stroke="#22dca6" stroke-width="1.5" opacity=".72" fill="none"/>
<path d="M792,296.8H795" stroke="#0a8a86" stroke-width="1.5" opacity=".72" fill="none"/>
<path d="M792,290.8H795" stroke="#0a8a86" stroke-width="2.2" opacity=".72" fill="none"/>
<path d="M1163.8,306.5H1166.8" stroke="#8ae838" stroke-width="1.5" opacity=".72" fill="none"/>
<path d="M1163.8,442.5H1166.8" stroke="#8ae838" stroke-width="1.5" opacity=".72" fill="none"/>
<path d="M825,294.3H821.4" stroke="#22dca6" stroke-width="1.5" opacity=".72" fill="none"/>
<path d="M1124,293.3H1127" stroke="#22dca6" stroke-width="1.5" opacity=".72" fill="none"/>
<path d="M1208.2,450.6H1211.2" stroke="#8ae838" stroke-width="1.5" opacity=".72" fill="none"/>
<path d="M1208.2,314.6H1211.2" stroke="#8ae838" stroke-width="1.5" opacity=".72" fill="none"/>
<path d="M1124,287.5H1127" stroke="#8ae838" stroke-width="2.4" opacity=".72" fill="none"/>
<path d="M1154,290.5H1150.4" stroke="#8ae838" stroke-width="1.5" opacity=".72" fill="none"/>
<path d="M1163.8,300.8H1166.8" stroke="#8ae838" stroke-width="1.5" opacity=".72" fill="none"/>
<path d="M1197.2,300.8H1193.6" stroke="#8ae838" stroke-width="1.5" opacity=".72" fill="none"/>
<path d="M1208.2,308.6H1211.2" stroke="#8ae838" stroke-width="1.5" opacity=".72" fill="none"/>
<path d="M1197.2,300.8H1193.6" stroke="#8ae838" stroke-width="1.5" opacity=".72" fill="none"/>
<path d="M1235.3,311.5H1231.7" stroke="#a40808" stroke-width="1.8" opacity=".72" fill="none"/>
<path d="M1235.3,311.5H1231.7" stroke="#a40808" stroke-width="1.6" opacity=".72" fill="none"/>
<path d="M1284,270.8H1287" stroke="#ffffff" stroke-width="2.7" opacity=".72" fill="none"/>
<path d="M1315,270.8H1311.4" stroke="#ffffff" stroke-width="2.7" opacity=".72" fill="none"/>
<path d="M1124,423.5H1127" stroke="#8ae838" stroke-width="2.4" opacity=".72" fill="none"/>
<path d="M1154,426.5H1150.4" stroke="#8ae838" stroke-width="1.5" opacity=".72" fill="none"/>
<path d="M1163.8,436.8H1166.8" stroke="#8ae838" stroke-width="1.5" opacity=".72" fill="none"/>
<path d="M1197.2,436.8H1193.6" stroke="#8ae838" stroke-width="1.5" opacity=".72" fill="none"/>
<path d="M1208.2,444.6H1211.2" stroke="#8ae838" stroke-width="1.5" opacity=".72" fill="none"/>
<path d="M1197.2,436.8H1193.6" stroke="#8ae838" stroke-width="1.5" opacity=".72" fill="none"/>
<path d="M1235.3,447.5H1231.7" stroke="#a40808" stroke-width="1.8" opacity=".72" fill="none"/>
<path d="M1235.3,447.5H1231.7" stroke="#a40808" stroke-width="1.6" opacity=".72" fill="none"/>
<path d="M1284,406.8H1287" stroke="#ffffff" stroke-width="2.7" opacity=".72" fill="none"/>
<path d="M1315,406.8H1311.4" stroke="#ffffff" stroke-width="2.7" opacity=".72" fill="none"/>
<path d="M308.1,569.7H311.1" stroke="#0b5ad8" stroke-width="2.6" opacity=".72" fill="none"/>
<path d="M339.2,563.2H335.6" stroke="#ffffff" stroke-width="2.7" opacity=".72" fill="none"/>
<path d="M339.2,569.7H335.6" stroke="#0b5ad8" stroke-width="2.6" opacity=".72" fill="none"/>
<path d="M675.9,594.9H678.9" stroke="#22dca6" stroke-width="1.5" opacity=".72" fill="none"/>
<path d="M675.9,589.2H678.9" stroke="#22dca6" stroke-width="1.5" opacity=".72" fill="none"/>
<path d="M709.2,589.2H705.6" stroke="#22dca6" stroke-width="1.5" opacity=".72" fill="none"/>
<path d="M712.2,557.7H715.2" stroke="#22dca6" stroke-width="1.5" opacity=".72" fill="none"/>
<path d="M712.2,551.2H715.2" stroke="#ffffff" stroke-width="2.7" opacity=".72" fill="none"/>
<path d="M1020,598.4H1023" stroke="#22dca6" stroke-width="1.5" opacity=".72" fill="none"/>
<path d="M1020,592.3H1023" stroke="#22dca6" stroke-width="1.5" opacity=".72" fill="none"/>
<path d="M1046.8,595.4H1043.2" stroke="#a40808" stroke-width="1.2" opacity=".72" fill="none"/>
<path d="M49.4,266.2h1.4l1.8,1.8l-1.8,1.8h-1.4z" fill="#fff" stroke="#fff" stroke-width=".3" stroke-linejoin="round"/>
<rect x="77.5" y="271.2" width="2.2" height="2.6" fill="#0b5ad8"/>
<path d="M98,261.2h1.4l1.8,1.8l-1.8,1.8h-1.4z" fill="#fff" stroke="#fff" stroke-width=".3" stroke-linejoin="round"/>
<rect x="98.4" y="268.2" width="2.2" height="2.6" fill="#0b5ad8"/>
<path d="M97.9,274.1h1.6l1.8,1.4l-1.8,1.4h-1.6z" fill="#22dca6"/>
<path d="M129.8,261.2h1.4l1.8,1.8l-1.8,1.8h-1.4z" fill="#fff" stroke="#fff" stroke-width=".3" stroke-linejoin="round"/>
<rect x="48.9" y="287.25" width="2.2" height="2.6" fill="#0b5ad8"/>
<rect x="62" y="309.2" width="2.2" height="2.6" fill="#0b5ad8"/>
<path d="M95.5,309.1h1.6l1.8,1.4l-1.8,1.4h-1.6z" fill="#22dca6"/>
<path d="M165.6,266.2h1.4l1.8,1.8l-1.8,1.8h-1.4z" fill="#fff" stroke="#fff" stroke-width=".3" stroke-linejoin="round"/>
<rect x="166" y="273.4" width="2.2" height="2.6" fill="#0b5ad8"/>
<path d="M193.8,266.2h1.4l1.8,1.8l-1.8,1.8h-1.4z" fill="#fff" stroke="#fff" stroke-width=".3" stroke-linejoin="round"/>
<path d="M193.7,273.3h1.6l1.8,1.4l-1.8,1.4h-1.6z" fill="#0b5ad8"/>
<path d="M193.7,279.3h1.6l1.8,1.4l-1.8,1.4h-1.6z" fill="#22dca6"/>
<path d="M193.8,285.2h1.4l1.8,1.8l-1.8,1.8h-1.4z" fill="#fff" stroke="#fff" stroke-width=".3" stroke-linejoin="round"/>
<path d="M238.1,266.2h1.4l1.8,1.8l-1.8,1.8h-1.4z" fill="#fff" stroke="#fff" stroke-width=".3" stroke-linejoin="round"/>
<path d="M238,273.3h1.6l1.8,1.4l-1.8,1.4h-1.6z" fill="#a40808"/>
<path d="M265.8,266.2h1.4l1.8,1.8l-1.8,1.8h-1.4z" fill="#fff" stroke="#fff" stroke-width=".3" stroke-linejoin="round"/>
<path d="M265.8,272.9h1.4l1.8,1.8l-1.8,1.8h-1.4z" fill="#fff" stroke="#fff" stroke-width=".3" stroke-linejoin="round"/>
<path d="M305.6,261.2h1.4l1.8,1.8l-1.8,1.8h-1.4z" fill="#fff" stroke="#fff" stroke-width=".3" stroke-linejoin="round"/>
<circle cx="306.7" cy="269.3" r="1.15" fill="#1c1c1c" stroke="#a40808" stroke-width=".85"/><path d="M308.1,268.5l.9,.8l-.9,.8z" fill="#a40808"/>
<path d="M329.3,261.2h1.4l1.8,1.8l-1.8,1.8h-1.4z" fill="#fff" stroke="#fff" stroke-width=".3" stroke-linejoin="round"/>
<circle cx="330.4" cy="269.3" r="1.15" fill="#1c1c1c" stroke="#a40808" stroke-width=".85"/><path d="M331.8,268.5l.9,.8l-.9,.8z" fill="#a40808"/>
<path d="M293.5,294.1h1.6l1.8,1.4l-1.8,1.4h-1.6z" fill="#0b5ad8"/>
<path d="M321.7,294.1h1.6l1.8,1.4l-1.8,1.4h-1.6z" fill="#ff0ed2"/>
<path d="M321.7,300.1h1.6l1.8,1.4l-1.8,1.4h-1.6z" fill="#ff0ed2"/>
<path d="M321.7,305.6h1.6l1.8,1.4l-1.8,1.4h-1.6z" fill="#22dca6"/>
<rect x="322.2" y="311.4" width="2.2" height="2.6" fill="#0b5ad8"/>
<path d="M321.7,317.1h1.6l1.8,1.4l-1.8,1.4h-1.6z" fill="#a40808"/>
<rect x="401.6" y="275.5" width="2.2" height="2.6" fill="#0b5ad8"/>
<path d="M453.9,261.3h1.4l1.8,1.8l-1.8,1.8h-1.4z" fill="#fff" stroke="#fff" stroke-width=".3" stroke-linejoin="round"/>
<rect x="454.3" y="268.1" width="2.2" height="2.6" fill="#0b5ad8"/>
<path d="M484.7,261.3h1.4l1.8,1.8l-1.8,1.8h-1.4z" fill="#fff" stroke="#fff" stroke-width=".3" stroke-linejoin="round"/>
<path d="M513.9,261.3h1.4l1.8,1.8l-1.8,1.8h-1.4z" fill="#fff" stroke="#fff" stroke-width=".3" stroke-linejoin="round"/>
<rect x="514.3" y="268.1" width="2.2" height="2.6" fill="#0b5ad8"/>
<path d="M513.8,274.1h1.6l1.8,1.4l-1.8,1.4h-1.6z" fill="#22dca6"/>
<path d="M545.6,261.3h1.4l1.8,1.8l-1.8,1.8h-1.4z" fill="#fff" stroke="#fff" stroke-width=".3" stroke-linejoin="round"/>
<rect x="466.3" y="289.1" width="2.2" height="2.6" fill="#0b5ad8"/>
<path d="M499.5,289.1h1.6l1.8,1.4l-1.8,1.4h-1.6z" fill="#22dca6"/>
<path d="M570.1,266.2h1.4l1.8,1.8l-1.8,1.8h-1.4z" fill="#fff" stroke="#fff" stroke-width=".3" stroke-linejoin="round"/>
<rect x="570.5" y="273.4" width="2.2" height="2.6" fill="#0b5ad8"/>
<path d="M598.3,266.2h1.4l1.8,1.8l-1.8,1.8h-1.4z" fill="#fff" stroke="#fff" stroke-width=".3" stroke-linejoin="round"/>
<path d="M598.2,273.3h1.6l1.8,1.4l-1.8,1.4h-1.6z" fill="#0b5ad8"/>
<path d="M598.2,279.3h1.6l1.8,1.4l-1.8,1.4h-1.6z" fill="#22dca6"/>
<path d="M598.3,285.2h1.4l1.8,1.8l-1.8,1.8h-1.4z" fill="#fff" stroke="#fff" stroke-width=".3" stroke-linejoin="round"/>
<path d="M629.5,286.1h1.6l1.8,1.4l-1.8,1.4h-1.6z" fill="#0b5ad8"/>
<path d="M657.7,286.1h1.6l1.8,1.4l-1.8,1.4h-1.6z" fill="#0a8a86"/>
<path d="M657.7,292.1h1.6l1.8,1.4l-1.8,1.4h-1.6z" fill="#8ae838"/>
<rect x="658.2" y="297.7" width="2.2" height="2.6" fill="#a40808"/>
<path d="M657.7,303.3h1.6l1.8,1.4l-1.8,1.4h-1.6z" fill="#8ae838"/>
<circle cx="658.9" cy="310.5" r="1.15" fill="#1c1c1c" stroke="#a40808" stroke-width=".85"/><path d="M660.3,309.7l.9,.8l-.9,.8z" fill="#a40808"/>
<path d="M745.6,266.2h1.4l1.8,1.8l-1.8,1.8h-1.4z" fill="#fff" stroke="#fff" stroke-width=".3" stroke-linejoin="round"/>
<path d="M745.5,273.3h1.6l1.8,1.4l-1.8,1.4h-1.6z" fill="#a40808"/>
<path d="M773.6,266.2h1.4l1.8,1.8l-1.8,1.8h-1.4z" fill="#fff" stroke="#fff" stroke-width=".3" stroke-linejoin="round"/>
<path d="M773.6,272.9h1.4l1.8,1.8l-1.8,1.8h-1.4z" fill="#fff" stroke="#fff" stroke-width=".3" stroke-linejoin="round"/>
<path d="M776.9,287.4h1.6l1.8,1.4l-1.8,1.4h-1.6z" fill="#0a8a86"/>
<rect x="794.4" y="289.5" width="2.2" height="2.6" fill="#0a8a86"/>
<path d="M793.9,295.4h1.6l1.8,1.4l-1.8,1.4h-1.6z" fill="#0a8a86"/>
<path d="M819.3,292.9h1.6l1.8,1.4l-1.8,1.4h-1.6z" fill="#22dca6"/>
<rect x="277.1" y="191.4" width="2.2" height="2.6" fill="#0b5ad8"/>
<path d="M317.6,190.2h1.4l1.8,1.8l-1.8,1.8h-1.4z" fill="#fff" stroke="#fff" stroke-width=".3" stroke-linejoin="round"/>
<rect x="318" y="197" width="2.2" height="2.6" fill="#0b5ad8"/>
<path d="M317.5,203.3h1.6l1.8,1.4l-1.8,1.4h-1.6z" fill="#22dca6"/>
<rect x="318" y="208.7" width="2.2" height="2.6" fill="#0b5ad8"/>
<circle cx="318.7" cy="215.4" r="1.15" fill="#1c1c1c" stroke="#a40808" stroke-width=".85"/><path d="M320.1,214.6l.9,.8l-.9,.8z" fill="#a40808"/>
<path d="M346.3,190.4a1.7,1.7 0 1 1 0,3.2" fill="none" stroke="#efefef" stroke-width=".85"/>
<rect x="573.6" y="407" width="2.2" height="2.6" fill="#0b5ad8"/>
<path d="M592.6,419.25h1.6l1.8,1.4l-1.8,1.4h-1.6z" fill="#a40808"/>
<path d="M613.9,398.1h1.6l1.8,1.4l-1.8,1.4h-1.6z" fill="#ff0ed2"/>
<path d="M613.9,404.1h1.6l1.8,1.4l-1.8,1.4h-1.6z" fill="#ff0ed2"/>
<rect x="614.4" y="409.7" width="2.2" height="2.6" fill="#22dca6"/>
<rect x="614.4" y="415.2" width="2.2" height="2.6" fill="#0b5ad8"/>
<path d="M613.9,420.9h1.6l1.8,1.4l-1.8,1.4h-1.6z" fill="#a40808"/>
<path d="M641.7,398.1h1.6l1.8,1.4l-1.8,1.4h-1.6z" fill="#0b5ad8"/>
<rect x="717.4" y="431.3" width="2.2" height="2.6" fill="#0b5ad8"/>
<path d="M757.8,402.2h1.4l1.8,1.8l-1.8,1.8h-1.4z" fill="#fff" stroke="#fff" stroke-width=".3" stroke-linejoin="round"/>
<rect x="758.2" y="409.2" width="2.2" height="2.6" fill="#0b5ad8"/>
<path d="M757.7,415.1h1.6l1.8,1.4l-1.8,1.4h-1.6z" fill="#22dca6"/>
<rect x="758.2" y="420.7" width="2.2" height="2.6" fill="#0b5ad8"/>
<circle cx="758.9" cy="427.5" r="1.15" fill="#1c1c1c" stroke="#a40808" stroke-width=".85"/><path d="M760.3,426.7l.9,.8l-.9,.8z" fill="#a40808"/>
<path d="M785.5,402.2h1.4l1.8,1.8l-1.8,1.8h-1.4z" fill="#fff" stroke="#fff" stroke-width=".3" stroke-linejoin="round"/>
<path d="M865.1,407.4h1.6l1.8,1.4l-1.8,1.4h-1.6z" fill="#a40808"/>
<path d="M889.9,402h1.4l1.8,1.8l-1.8,1.8h-1.4z" fill="#fff" stroke="#fff" stroke-width=".3" stroke-linejoin="round"/>
<path d="M889.8,408.9h1.6l1.8,1.4l-1.8,1.4h-1.6z" fill="#a40808"/>
<path d="M917.8,402h1.4l1.8,1.8l-1.8,1.8h-1.4z" fill="#fff" stroke="#fff" stroke-width=".3" stroke-linejoin="round"/>
<path d="M918.3,408.7a1.7,1.7 0 1 1 0,3.2" fill="none" stroke="#efefef" stroke-width=".85"/>
<circle cx="882.7" cy="431.3" r="1.15" fill="#1c1c1c" stroke="#ff0ed2" stroke-width=".85"/><path d="M884.1,430.5l.9,.8l-.9,.8z" fill="#ff0ed2"/>
<path d="M881.5,435.9h1.6l1.8,1.4l-1.8,1.4h-1.6z" fill="#ff0ed2"/>
<path d="M909.4,429.9h1.6l1.8,1.4l-1.8,1.4h-1.6z" fill="#ff0ed2"/>
<path d="M957.6,402h1.4l1.8,1.8l-1.8,1.8h-1.4z" fill="#fff" stroke="#fff" stroke-width=".3" stroke-linejoin="round"/>
<circle cx="958.7" cy="410.2" r="1.15" fill="#1c1c1c" stroke="#12b8e8" stroke-width=".85"/><path d="M960.1,409.4l.9,.8l-.9,.8z" fill="#12b8e8"/>
<path d="M957.5,414.6h1.6l1.8,1.4l-1.8,1.4h-1.6z" fill="#ff0ed2"/>
<path d="M986.3,402.2a1.7,1.7 0 1 1 0,3.2" fill="none" stroke="#efefef" stroke-width=".85"/>
<path d="M1080.6,287.4h1.6l1.8,1.4l-1.8,1.4h-1.6z" fill="#8ae838"/>
<rect x="1126.4" y="286.2" width="2.2" height="2.6" fill="#8ae838"/>
<path d="M1125.9,291.9h1.6l1.8,1.4l-1.8,1.4h-1.6z" fill="#22dca6"/>
<path d="M1148.3,289.1h1.6l1.8,1.4l-1.8,1.4h-1.6z" fill="#8ae838"/>
<path d="M1165.7,299.4h1.6l1.8,1.4l-1.8,1.4h-1.6z" fill="#8ae838"/>
<path d="M1165.7,305.1h1.6l1.8,1.4l-1.8,1.4h-1.6z" fill="#8ae838"/>
<path d="M1191.5,299.4h1.6l1.8,1.4l-1.8,1.4h-1.6z" fill="#8ae838"/>
<path d="M1210.1,307.2h1.6l1.8,1.4l-1.8,1.4h-1.6z" fill="#8ae838"/>
<path d="M1210.1,313.2h1.6l1.8,1.4l-1.8,1.4h-1.6z" fill="#8ae838"/>
<rect x="1230.1" y="310.2" width="2.2" height="2.6" fill="#a40808"/>
<path d="M1233.6,266.1h1.4l1.8,1.8l-1.8,1.8h-1.4z" fill="#fff" stroke="#fff" stroke-width=".3" stroke-linejoin="round"/>
<path d="M1233.5,273.1h1.6l1.8,1.4l-1.8,1.4h-1.6z" fill="#a40808"/>
<path d="M1261.8,266.1h1.4l1.8,1.8l-1.8,1.8h-1.4z" fill="#fff" stroke="#fff" stroke-width=".3" stroke-linejoin="round"/>
<path d="M1261.8,272.9h1.4l1.8,1.8l-1.8,1.8h-1.4z" fill="#fff" stroke="#fff" stroke-width=".3" stroke-linejoin="round"/>
<path d="M1286,269h1.4l1.8,1.8l-1.8,1.8h-1.4z" fill="#fff" stroke="#fff" stroke-width=".3" stroke-linejoin="round"/>
<circle cx="1287.1" cy="277.3" r="1.15" fill="#1c1c1c" stroke="#a40808" stroke-width=".85"/><path d="M1288.5,276.5l.9,.8l-.9,.8z" fill="#a40808"/>
<path d="M1309.4,269h1.4l1.8,1.8l-1.8,1.8h-1.4z" fill="#fff" stroke="#fff" stroke-width=".3" stroke-linejoin="round"/>
<circle cx="1310.5" cy="277.3" r="1.15" fill="#1c1c1c" stroke="#a40808" stroke-width=".85"/><path d="M1311.9,276.5l.9,.8l-.9,.8z" fill="#a40808"/>
<path d="M1349.5,286.1h1.6l1.8,1.4l-1.8,1.4h-1.6z" fill="#0a8a86"/>
<path d="M1349.5,292.3h1.6l1.8,1.4l-1.8,1.4h-1.6z" fill="#8ae838"/>
<rect x="1350" y="297.7" width="2.2" height="2.6" fill="#a40808"/>
<path d="M1349.5,303.1h1.6l1.8,1.4l-1.8,1.4h-1.6z" fill="#8ae838"/>
<path d="M1349.5,309.1h1.6l1.8,1.4l-1.8,1.4h-1.6z" fill="#a40808"/>
<path d="M1377.7,286.1h1.6l1.8,1.4l-1.8,1.4h-1.6z" fill="#0b5ad8"/>
<path d="M1485.9,266.2h1.4l1.8,1.8l-1.8,1.8h-1.4z" fill="#fff" stroke="#fff" stroke-width=".3" stroke-linejoin="round"/>
<rect x="1486.3" y="273.2" width="2.2" height="2.6" fill="#0b5ad8"/>
<path d="M1485.8,279.1h1.6l1.8,1.4l-1.8,1.4h-1.6z" fill="#22dca6"/>
<rect x="1486.3" y="284.7" width="2.2" height="2.6" fill="#0b5ad8"/>
<circle cx="1487" cy="291.5" r="1.15" fill="#1c1c1c" stroke="#a40808" stroke-width=".85"/><path d="M1488.4,290.7l.9,.8l-.9,.8z" fill="#a40808"/>
<path d="M1514.3,266.4a1.7,1.7 0 1 1 0,3.2" fill="none" stroke="#efefef" stroke-width=".85"/>
<path d="M1080.6,419.4h1.6l1.8,1.4l-1.8,1.4h-1.6z" fill="#8ae838"/>
<rect x="1126.4" y="422.2" width="2.2" height="2.6" fill="#8ae838"/>
<circle cx="1127.1" cy="429.3" r="1.15" fill="#1c1c1c" stroke="#12b8e8" stroke-width=".85"/><path d="M1128.5,428.5l.9,.8l-.9,.8z" fill="#12b8e8"/>
<path d="M1148.3,425.1h1.6l1.8,1.4l-1.8,1.4h-1.6z" fill="#8ae838"/>
<path d="M1165.7,435.4h1.6l1.8,1.4l-1.8,1.4h-1.6z" fill="#8ae838"/>
<path d="M1165.7,441.1h1.6l1.8,1.4l-1.8,1.4h-1.6z" fill="#8ae838"/>
<path d="M1191.5,435.4h1.6l1.8,1.4l-1.8,1.4h-1.6z" fill="#8ae838"/>
<path d="M1210.1,443.2h1.6l1.8,1.4l-1.8,1.4h-1.6z" fill="#8ae838"/>
<path d="M1210.1,449.2h1.6l1.8,1.4l-1.8,1.4h-1.6z" fill="#8ae838"/>
<rect x="1230.1" y="446.2" width="2.2" height="2.6" fill="#a40808"/>
<path d="M1233.6,402.1h1.4l1.8,1.8l-1.8,1.8h-1.4z" fill="#fff" stroke="#fff" stroke-width=".3" stroke-linejoin="round"/>
<path d="M1233.5,409.1h1.6l1.8,1.4l-1.8,1.4h-1.6z" fill="#a40808"/>
<path d="M1261.8,402.1h1.4l1.8,1.8l-1.8,1.8h-1.4z" fill="#fff" stroke="#fff" stroke-width=".3" stroke-linejoin="round"/>
<path d="M1261.8,408.9h1.4l1.8,1.8l-1.8,1.8h-1.4z" fill="#fff" stroke="#fff" stroke-width=".3" stroke-linejoin="round"/>
<path d="M1286,405h1.4l1.8,1.8l-1.8,1.8h-1.4z" fill="#fff" stroke="#fff" stroke-width=".3" stroke-linejoin="round"/>
<circle cx="1287.1" cy="413.3" r="1.15" fill="#1c1c1c" stroke="#a40808" stroke-width=".85"/><path d="M1288.5,412.5l.9,.8l-.9,.8z" fill="#a40808"/>
<path d="M1309.4,405h1.4l1.8,1.8l-1.8,1.8h-1.4z" fill="#fff" stroke="#fff" stroke-width=".3" stroke-linejoin="round"/>
<circle cx="1310.5" cy="413.3" r="1.15" fill="#1c1c1c" stroke="#a40808" stroke-width=".85"/><path d="M1311.9,412.5l.9,.8l-.9,.8z" fill="#a40808"/>
<path d="M1349.5,422.1h1.6l1.8,1.4l-1.8,1.4h-1.6z" fill="#0a8a86"/>
<path d="M1349.5,428.3h1.6l1.8,1.4l-1.8,1.4h-1.6z" fill="#8ae838"/>
<rect x="1350" y="433.7" width="2.2" height="2.6" fill="#a40808"/>
<path d="M1349.5,439.1h1.6l1.8,1.4l-1.8,1.4h-1.6z" fill="#8ae838"/>
<path d="M1349.5,445.1h1.6l1.8,1.4l-1.8,1.4h-1.6z" fill="#a40808"/>
<path d="M1377.7,422.1h1.6l1.8,1.4l-1.8,1.4h-1.6z" fill="#0b5ad8"/>
<path d="M1485.9,402.2h1.4l1.8,1.8l-1.8,1.8h-1.4z" fill="#fff" stroke="#fff" stroke-width=".3" stroke-linejoin="round"/>
<rect x="1486.3" y="409.2" width="2.2" height="2.6" fill="#0b5ad8"/>
<path d="M1485.8,415.1h1.6l1.8,1.4l-1.8,1.4h-1.6z" fill="#22dca6"/>
<rect x="1486.3" y="420.7" width="2.2" height="2.6" fill="#0b5ad8"/>
<circle cx="1487" cy="427.5" r="1.15" fill="#1c1c1c" stroke="#a40808" stroke-width=".85"/><path d="M1488.4,426.7l.9,.8l-.9,.8z" fill="#a40808"/>
<path d="M1514.3,402.4a1.7,1.7 0 1 1 0,3.2" fill="none" stroke="#efefef" stroke-width=".85"/>
<rect x="1409.5" y="339.4" width="2.2" height="2.6" fill="#0b5ad8"/>
<rect x="277.6" y="571.5" width="2.2" height="2.6" fill="#0b5ad8"/>
<path d="M310.1,561.4h1.4l1.8,1.8l-1.8,1.8h-1.4z" fill="#fff" stroke="#fff" stroke-width=".3" stroke-linejoin="round"/>
<rect x="310.5" y="568.4" width="2.2" height="2.6" fill="#0b5ad8"/>
<path d="M333.6,561.4h1.4l1.8,1.8l-1.8,1.8h-1.4z" fill="#fff" stroke="#fff" stroke-width=".3" stroke-linejoin="round"/>
<rect x="334" y="568.4" width="2.2" height="2.6" fill="#0b5ad8"/>
<path d="M505.6,554.2h1.4l1.8,1.8l-1.8,1.8h-1.4z" fill="#fff" stroke="#fff" stroke-width=".3" stroke-linejoin="round"/>
<rect x="506" y="561.2" width="2.2" height="2.6" fill="#0b5ad8"/>
<path d="M533.8,554.2h1.4l1.8,1.8l-1.8,1.8h-1.4z" fill="#fff" stroke="#fff" stroke-width=".3" stroke-linejoin="round"/>
<path d="M533.7,561.1h1.6l1.8,1.4l-1.8,1.4h-1.6z" fill="#0b5ad8"/>
<circle cx="534.9" cy="568.5" r="1.15" fill="#1c1c1c" stroke="#22dca6" stroke-width=".85"/><path d="M536.3,567.7l.9,.8l-.9,.8z" fill="#22dca6"/>
<path d="M533.8,573.2h1.4l1.8,1.8l-1.8,1.8h-1.4z" fill="#fff" stroke="#fff" stroke-width=".3" stroke-linejoin="round"/>
<path d="M557.7,590.6h1.6l1.8,1.4l-1.8,1.4h-1.6z" fill="#0b5ad8"/>
<circle cx="586.8" cy="592" r="1.15" fill="#1c1c1c" stroke="#ff0ed2" stroke-width=".85"/><path d="M588.2,591.2l.9,.8l-.9,.8z" fill="#ff0ed2"/>
<circle cx="586.8" cy="598" r="1.15" fill="#1c1c1c" stroke="#ff0ed2" stroke-width=".85"/><path d="M588.2,597.2l.9,.8l-.9,.8z" fill="#ff0ed2"/>
<rect x="586.1" y="602.2" width="2.2" height="2.6" fill="#22dca6"/>
<circle cx="586.8" cy="609.2" r="1.15" fill="#1c1c1c" stroke="#0b5ad8" stroke-width=".85"/><path d="M588.2,608.4l.9,.8l-.9,.8z" fill="#0b5ad8"/>
<path d="M585.6,613.6h1.6l1.8,1.4l-1.8,1.4h-1.6z" fill="#a40808"/>
<path d="M641.6,554.2h1.4l1.8,1.8l-1.8,1.8h-1.4z" fill="#fff" stroke="#fff" stroke-width=".3" stroke-linejoin="round"/>
<path d="M641.5,561.1h1.6l1.8,1.4l-1.8,1.4h-1.6z" fill="#a40808"/>
<path d="M669.8,554.2h1.4l1.8,1.8l-1.8,1.8h-1.4z" fill="#fff" stroke="#fff" stroke-width=".3" stroke-linejoin="round"/>
<path d="M670.3,560.9a1.7,1.7 0 1 1 0,3.2" fill="none" stroke="#efefef" stroke-width=".85"/>
<path d="M714.2,549.4h1.4l1.8,1.8l-1.8,1.8h-1.4z" fill="#fff" stroke="#fff" stroke-width=".3" stroke-linejoin="round"/>
<path d="M714.1,556.3h1.6l1.8,1.4l-1.8,1.4h-1.6z" fill="#22dca6"/>
<path d="M738,549.6a1.7,1.7 0 1 1 0,3.2" fill="none" stroke="#efefef" stroke-width=".85"/>
<circle cx="738.6" cy="557.7" r="1.15" fill="#1c1c1c" stroke="#22dca6" stroke-width=".85"/><path d="M740,556.9l.9,.8l-.9,.8z" fill="#22dca6"/>
<path d="M665.1,583.4h1.6l1.8,1.4l-1.8,1.4h-1.6z" fill="#22dca6"/>
<path d="M677.8,587.8h1.6l1.8,1.4l-1.8,1.4h-1.6z" fill="#22dca6"/>
<path d="M677.8,593.5h1.6l1.8,1.4l-1.8,1.4h-1.6z" fill="#22dca6"/>
<path d="M703.5,587.8h1.6l1.8,1.4l-1.8,1.4h-1.6z" fill="#22dca6"/>
<rect x="809.1" y="579.6" width="2.2" height="2.6" fill="#0b5ad8"/>
<path d="M826,574.2h1.4l1.8,1.8l-1.8,1.8h-1.4z" fill="#fff" stroke="#fff" stroke-width=".3" stroke-linejoin="round"/>
<rect x="826.4" y="581.2" width="2.2" height="2.6" fill="#0b5ad8"/>
<path d="M826,587.2h1.4l1.8,1.8l-1.8,1.8h-1.4z" fill="#fff" stroke="#fff" stroke-width=".3" stroke-linejoin="round"/>
<path d="M853.6,574.2h1.4l1.8,1.8l-1.8,1.8h-1.4z" fill="#fff" stroke="#fff" stroke-width=".3" stroke-linejoin="round"/>
<path d="M853.5,581.1h1.6l1.8,1.4l-1.8,1.4h-1.6z" fill="#0b5ad8"/>
<circle cx="854.7" cy="588.5" r="1.15" fill="#1c1c1c" stroke="#22dca6" stroke-width=".85"/><path d="M856.1,587.7l.9,.8l-.9,.8z" fill="#22dca6"/>
<path d="M854.1,593.4a1.7,1.7 0 1 1 0,3.2" fill="none" stroke="#efefef" stroke-width=".85"/>
<path d="M889.8,590.2h1.6l1.8,1.4l-1.8,1.4h-1.6z" fill="#0b5ad8"/>
<path d="M917.5,590.2h1.6l1.8,1.4l-1.8,1.4h-1.6z" fill="#ff0ed2"/>
<path d="M917.5,596.1h1.6l1.8,1.4l-1.8,1.4h-1.6z" fill="#22dca6"/>
<rect x="918" y="601.7" width="2.2" height="2.6" fill="#a40808"/>
<path d="M978,574.2h1.4l1.8,1.8l-1.8,1.8h-1.4z" fill="#fff" stroke="#fff" stroke-width=".3" stroke-linejoin="round"/>
<path d="M977.9,581h1.6l1.8,1.4l-1.8,1.4h-1.6z" fill="#a40808"/>
<path d="M1006.1,574.4a1.7,1.7 0 1 1 0,3.2" fill="none" stroke="#efefef" stroke-width=".85"/>
<path d="M1005.6,580.8h1.4l1.8,1.8l-1.8,1.8h-1.4z" fill="#fff" stroke="#fff" stroke-width=".3" stroke-linejoin="round"/>
<path d="M1004.1,587.45h1.6l1.8,1.4l-1.8,1.4h-1.6z" fill="#22dca6"/>
<path d="M1025.8,586.2h1.4l1.8,1.8l-1.8,1.8h-1.4z" fill="#fff" stroke="#fff" stroke-width=".3" stroke-linejoin="round"/>
<path d="M1054.2,586.4a1.7,1.7 0 1 1 0,3.2" fill="none" stroke="#efefef" stroke-width=".85"/>
<path d="M1021.9,590.9h1.6l1.8,1.4l-1.8,1.4h-1.6z" fill="#22dca6"/>
<path d="M1021.9,597h1.6l1.8,1.4l-1.8,1.4h-1.6z" fill="#22dca6"/>
<path d="M1041.1,594h1.6l1.8,1.4l-1.8,1.4h-1.6z" fill="#a40808"/>
<circle cx="1026.7" cy="594.5" r="1.15" fill="#1c1c1c" stroke="#12b8e8" stroke-width=".85"/><path d="M1028.1,593.7l.9,.8l-.9,.8z" fill="#12b8e8"/>
<path d="M1025.6,599.2h1.6l1.8,1.4l-1.8,1.4h-1.6z" fill="#ff0ed2"/>
<path d="M1062.1,582.2h1.4l1.8,1.8l-1.8,1.8h-1.4z" fill="#fff" stroke="#fff" stroke-width=".3" stroke-linejoin="round"/>
<path d="M1062,589.3h1.6l1.8,1.4l-1.8,1.4h-1.6z" fill="#a40808"/>
<path d="M1089.5,582.2h1.4l1.8,1.8l-1.8,1.8h-1.4z" fill="#fff" stroke="#fff" stroke-width=".3" stroke-linejoin="round"/>
<path d="M1089.5,589.1h1.4l1.8,1.8l-1.8,1.8h-1.4z" fill="#fff" stroke="#fff" stroke-width=".3" stroke-linejoin="round"/>
<path d="M1096.7,581.7h1.4l1.8,1.8l-1.8,1.8h-1.4z" fill="#fff" stroke="#fff" stroke-width=".3" stroke-linejoin="round"/>
</svg>
<div id="wm">BLUEPRINT</div>
</div><div id="vig"></div></div></div>
<div id="hdr"></div>
<svg style="left:8px;top:44px" width="34" height="34" viewBox="0 0 34 34"><path d="M16 7.6l3.2 6.9 7.5.9-5.5 5.2 1.4 7.4-6.6-3.7-6.6 3.7 1.4-7.4-5.5-5.2 7.5-.9z" fill="none" stroke="#cfcfcf" stroke-width="1.55" stroke-linejoin="miter"/></svg>
<div style="left:45px;top:39px;width:1.4px;height:45px;background:linear-gradient(rgba(150,150,150,.2),#8c8c8c 50%,rgba(150,150,150,.2))"></div>
<div style="left:153px;top:39px;width:1.4px;height:45px;background:linear-gradient(rgba(150,150,150,.2),#8c8c8c 50%,rgba(150,150,150,.2))"></div>
<svg style="left:58px;top:40px" width="84" height="40" viewBox="0 0 84 40"><ellipse cx="14" cy="31" rx="10" ry="1.6" fill="#3a3a3a" opacity=".6"/><ellipse cx="68" cy="31" rx="10" ry="1.6" fill="#3a3a3a" opacity=".6"/><path d="M2.7 19.7L15 5.4v8.6h8.5v11H15V34z" fill="#7f7f7f"/><path d="M78.3 19.7L66 5.4v8.6h-8.5v11H66V34z" fill="#7f7f7f"/></svg>
<svg style="left:166px;top:40px" width="36" height="42" viewBox="0 0 36 42"><path d="M20 33l8-4.5-3 5z" fill="#050505"/><text transform="translate(7.3 32.3) scale(1.2 1)" font-family="DejaVu Serif,Liberation Serif,serif" font-style="italic" font-weight="700" font-size="33" fill="#b4c0ee">f</text></svg>
<div id="crumb"><span style="position:static;letter-spacing:0.773px">ProgressionSystemClass</span><svg style="position:static;vertical-align:-4.5px;margin:0 9px 0 7px" width="13" height="20" viewBox="0 0 13 20"><path d="M2 1.5l9 8.5-9 8.5" fill="none" stroke="#d2d2d2" stroke-width="2.4"/></svg><span style="position:static;letter-spacing:0.684px">End Match</span></div>
<div id="zoom">Zoom -8</div>
</body></html>
